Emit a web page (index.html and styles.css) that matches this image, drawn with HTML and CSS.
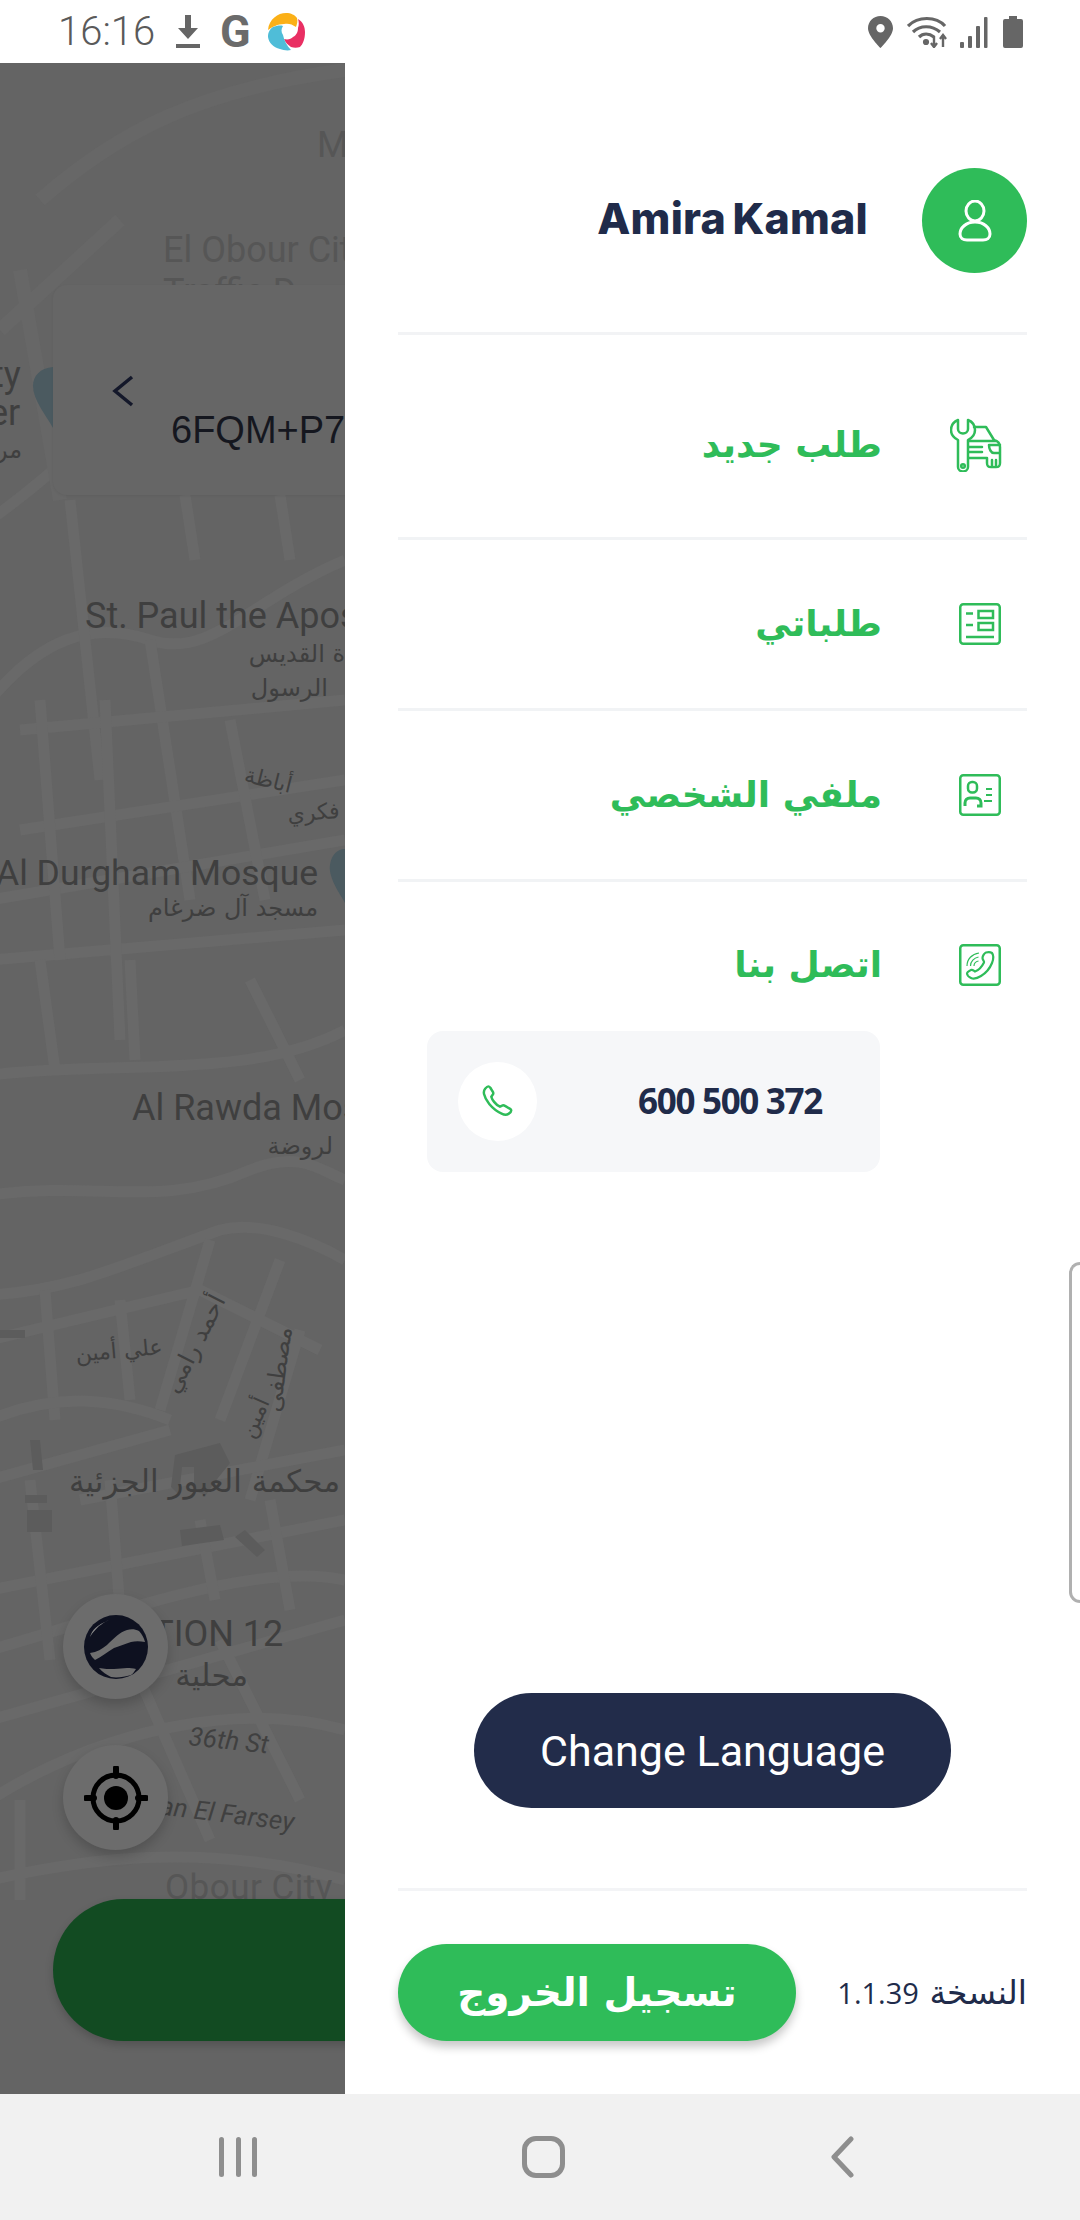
FILE: index.html
```html
<!DOCTYPE html>
<html lang="ar">
<head>
<meta charset="utf-8">
<title>Menu</title>
<link rel="stylesheet" href="styles.css">
</head>
<body>
<div class="screen">
  <header class="status">
    <div class="status-left">
      <span class="clock">16:16</span>
      <svg class="st-download" viewBox="0 0 26 33"><path d="M10 0h6v13h7L13 24 3 13h7z"/><rect x="1" y="29" width="24" height="4"/></svg>
      <span class="st-g">G</span>
      <svg class="st-logo" viewBox="0 0 38 38">
        <path d="M0 17C1 6 10 0 18 0c5 0 9 2 11 5 1 3 0 6-1 9-4-3-8-4-12-3-6 0-12 3-16 6z" fill="#fbb017"/>
        <path d="M30 6c5 3 7 8 7 13 0 7-2 12-5 15-3 1-6 1-9 0-3-2-6-5-7-8 4 1 7 0 9-2 4-2 5-6 5-9 1-3 1-6 0-9z" fill="#e92f63"/>
        <path d="M0 24c0-5 2-8 5-10 3-1 7-2 10-1-2 3-2 6 0 9 1 5 4 11 8 15-4 1-8 0-11-1C5 34 1 30 0 24z" fill="#4fbdd8"/>
      </svg>
    </div>
    <div class="status-right">
      <svg class="st-pin" viewBox="0 0 25 32"><path fill-rule="evenodd" d="M12.500 0C5.600 0 0 5.400 0 12.200 0 20 12.500 32 12.500 32S25 20 25 12.200C25 5.400 19.400 0 12.500 0zm0 8a4.200 4.200 0 1 1 0 8.400 4.200 4.200 0 0 1 0-8.400z"/></svg>
      <svg class="st-wifi" viewBox="0 0 44 32" fill="none" stroke="#666" stroke-width="3.200"><path d="M1 10C11 0 29 0 38 10"/><path d="M6 16c7-7 19-7 27 0"/><path d="M12 21c4-4 10-4 15 0"/><circle cx="19" cy="26" r="1.500" fill="#666"/><path d="M27 20v11M36 31V19" stroke-width="2.400"/><path d="M24 27l3 4 3-4M33 23l3-4 3 4" stroke-width="2.400"/></svg>
      <svg class="st-signal" viewBox="0 0 28 32"><rect x="0" y="26" width="4" height="6" rx="1"/><rect x="8" y="20" width="4" height="12" rx="1"/><rect x="16" y="10" width="4" height="22" rx="1"/><rect x="24" y="1" width="3.500" height="31" rx="1"/></svg>
      <svg class="st-battery" viewBox="0 0 20 32"><path d="M6 0h8v3h4a2 2 0 0 1 2 2v25a2 2 0 0 1-2 2H2a2 2 0 0 1-2-2V5a2 2 0 0 1 2-2h4z"/></svg>
    </div>
  </header>

  <main class="main">
    <section class="map">
      <svg class="map-canvas" viewBox="0 63 345 2031">
        <g class="roads">
          <path d="M-10 520C60 470 110 420 170 350M-10 700C40 640 90 620 150 640 210 660 250 600 345 560"/>
          <path d="M70 500L100 780M185 495L195 560M280 495L290 560M150 640L190 900"/>
          <path d="M20 730L345 700M20 830L345 780M-10 900L345 840M-10 960L345 930"/>
          <path d="M40 700L60 960M105 700L120 1040M230 720L265 900"/>
          <path d="M-10 1075C120 1060 250 1080 345 1030M40 960L55 1070M130 960L135 1060M250 980L300 1080"/>
          <path d="M-10 1195C100 1180 160 1210 250 1170 300 1150 320 1170 345 1180M-10 1295C70 1290 110 1270 220 1230 260 1220 310 1240 345 1260"/>
          <path d="M-10 1340L200 1290 320 1350M45 1290L55 1420M120 1300L130 1400M210 1240L160 1410M280 1260L220 1420M300 1330L250 1500"/>
          <path d="M-10 1420C60 1390 120 1400 170 1420M-10 1480L170 1430M80 1500L345 1450M-10 1590L345 1520M-10 1650C100 1620 250 1560 345 1580"/>
          <path d="M30 1480L50 1660M110 1480L120 1610M200 1520L215 1600M270 1500L290 1610"/>
          <path d="M-10 1720L345 1620M-10 1800C100 1730 240 1700 345 1730M140 1680L210 1840M220 1640L300 1800M-10 1880C80 1860 200 1840 345 1880M20 1800L20 1900"/>
          <path class="thin" d="M40 200C120 130 200 90 345 70M0 330L120 220M20 270L60 500"/>
        </g>
        <path class="block" d="M175 1455l45-12 10 20-16 20-8 12-12-4v-24h-12l-3 28-8-8z"/>
        <path class="block" d="M0 1330h25v8H0zM30 1440h10l3 30H33zM25 1495h22v8H25zM27 1510h25v22H27zM180 1530l40-5 4 15-42 6zM245 1530l20 20-8 7-22-20z"/>
        <path class="pin" d="M53 367c-13 1-20 9-20 19 0 14 13 29 20 42z"/>
        <path class="pin" d="M345 849c-10 0-16 10-15 22 2 14 15 30 15 32z"/>

        <text class="lbl faint" x="317" y="157">M</text>
        <text class="lbl faint" x="163" y="262">El Obour City</text>
        <text class="lbl faint" x="163" y="304">Traffic D</text>
        <text class="lbl" x="-8" y="387">ty</text>
        <text class="lbl" x="-11" y="425">er</text>
        <text class="ar sm" x="22" y="458">مر</text>
        <text class="lbl" x="85" y="628">St. Paul the Apostle</text>
        <text class="ar sm" x="345" y="662">ة القديس</text>
        <text class="ar sm" x="328" y="696">الرسول</text>
        <text class="ar xs" transform="translate(290 793) rotate(14)">أباظة</text>
        <text class="ar xs" transform="translate(340 818) rotate(-4)">فكري</text>
        <text class="lbl durgham" x="-4" y="885">Al Durgham Mosque</text>
        <text class="ar sm" x="318" y="916">مسجد آل ضرغام</text>
        <text class="lbl" x="132" y="1120">Al Rawda Mosque</text>
        <text class="ar sm" x="333" y="1154">لروضة</text>
        <text class="ar xs" transform="translate(163 1354) rotate(-5)">علي أمين</text>
        <text class="ar sm" transform="translate(226 1300) rotate(-63)">أحمد رامي</text>
        <text class="ar sm" transform="translate(292 1328) rotate(-82)">مصطفى</text>
        <text class="ar xs" transform="translate(270 1402) rotate(-66)">أمين</text>
        <text class="ar md" x="340" y="1492">محكمة العبور الجزئية</text>
        <text class="lbl" x="131" y="1646">ATION 12</text>
        <text class="ar md" x="248" y="1686">محلية</text>
        <text class="ital" transform="translate(188 1745) rotate(6)">36th St</text>
        <text class="ital" transform="translate(123 1810) rotate(7)">Eman El Farsey</text>
        <text class="lbl faint wide" x="165" y="1899">Obour City</text>
      </svg>

      <div class="search-card">
        <svg class="card-back" viewBox="0 0 22 32" fill="none"><path d="M20 2L3 16l17 14"/></svg>
        <span class="card-code">6FQM+P7</span>
      </div>
      <button class="fab fab-globe" aria-label="Map">
        <svg viewBox="0 0 64 64">
          <circle cx="32" cy="32" r="32" fill="#0e1120"/>
          <path d="M6 38c7-1 12-4 17-8 6-6 13-13 20-15 4-1 8-1 12 1 3 3 5 7 6 11-5-1-10-1-14 0-6 2-11 4-17 6-7 4-13 9-19 12-2-2-4-4-5-7z" fill="#6f6f6f"/>
          <path d="M15 53c5 1 10 1 15 1 5 0 9-1 13-1 3 0 6 0 9 1-2 3-3 5-5 6-7 2-14 3-20 2-4-2-9-5-12-9z" fill="#6f6f6f"/>
          <path d="M6 22C8 15 13 10 25 5 18 8 16 11 15 11 12 14 8 18 6 22z" fill="#8a8a8a"/>
        </svg>
      </button>
      <button class="fab fab-target" aria-label="Location">
        <svg viewBox="0 0 64 64" fill="none" stroke="#000">
          <circle cx="32" cy="32" r="23" stroke-width="5"/>
          <circle cx="32" cy="32" r="12" fill="#000" stroke="none"/>
          <path d="M32 2v8M32 54v8M2 32h8M54 32h8" stroke-width="6" stroke-linecap="round"/>
        </svg>
      </button>
      <div class="go-button"></div>
    </section>

    <aside class="drawer" dir="rtl">
      <div class="profile">
        <div class="avatar">
          <svg viewBox="0 0 36 42" fill="none" stroke="#fff" stroke-width="3"><ellipse cx="18" cy="11" rx="9" ry="10"/><path d="M18 22c-9 0-15 6-15 12 0 4 3 6 7 6h16c4 0 7-2 7-6 0-6-6-12-15-12z"/></svg>
        </div>
        <span class="name" dir="ltr">Amira Kamal</span>
      </div>

      <nav class="menu">
        <a class="row row-first">
          <span class="row-icon wide-icon">
            <svg viewBox="0 0 52 54" fill="none" stroke="#2fbc59" stroke-width="2.500" stroke-linejoin="round" stroke-linecap="round">
              <path d="M8 2C3 4 1 8 1 12c0 5 3 8 7 10v27c0 6 10 6 10 0V22c4-2 7-5 7-10 0-4-2-8-7-10v9c0 6-10 6-10 0z"/>
              <circle cx="13" cy="48" r="1.800"/>
              <path d="M24 9h12l8 13c4 1 6 3 6 7v16c0 3-1 4-4 4h-5c-3 0-4-1-4-4v-5H19M19 23h26M19 29h13M19 34h13M39 27h11M39 27c0 4 2 8 5 8h6M42 42v5M46 42v5"/>
            </svg>
          </span>
          <span class="row-label">طلب جديد</span>
        </a>
        <a class="row">
          <span class="row-icon">
            <svg viewBox="0 0 42 42" fill="none" stroke="#2fbc59" stroke-width="2.500"><rect x="1.250" y="1.250" width="39.500" height="39.500" rx="3"/><rect x="19.500" y="8" width="14.500" height="7"/><rect x="19.500" y="20" width="14.500" height="7"/><path d="M7 10.500h7M7 22h7M7 34h28"/></svg>
          </span>
          <span class="row-label">طلباتي</span>
        </a>
        <a class="row">
          <span class="row-icon">
            <svg viewBox="0 0 42 42" fill="none" stroke="#2fbc59" stroke-width="2.500"><rect x="1.250" y="1.250" width="39.500" height="39.500" rx="3"/><rect x="9" y="8" width="9" height="10.500" rx="4"/><path d="M6 32v-3c0-3 2-5 5-5h6c3 0 5 2 5 5v3h-4" stroke-width="3"/><path d="M27 15h6M27 21h6M25 27h8" stroke-width="2"/></svg>
          </span>
          <span class="row-label">ملفي الشخصي</span>
        </a>
        <div class="row row-last">
          <span class="row-icon">
            <svg viewBox="0 0 42 42" fill="none" stroke="#2fbc59" stroke-width="2.500"><rect x="1.250" y="1.250" width="39.500" height="39.500" rx="3"/><path stroke-width="2.200" d="M33 9c1.500 2 2 5 0 10-2 5-6 10-11 13-4 2.500-8 3-10 2-2-.8-4-3-4-4.500 0-1 2-2.500 4-3.500 1.500-.7 3 1 4 1.500 3-1 7-5 9-9 .5-1.500-1.500-2.500-1.500-4.500 0-2 2-5 3.500-5.500 2-.5 4.500-.5 6 .5z"/><path stroke-width="1.200" d="M8 22c0-7 5-12 12-13M11.500 22c0-4.500 3.500-8 8-9M15 22c0-2.500 2-4.500 4.500-5"/></svg>
          </span>
          <span class="row-label">اتصل بنا</span>
        </div>
        <div class="phone-card" dir="ltr">
          <span class="phone-circle">
            <svg viewBox="0 0 24 24" fill="none" stroke="#2fbc59" stroke-width="1.800" stroke-linejoin="round"><path d="M22 18.500c0 .8-1 1.900-2 2.500-1.300.8-3 .8-5-.2-3.500-1.600-6.500-4-9-7-2-2.500-3.300-5-3.800-7.300-.3-1.500 0-2.800.8-3.800.6-.7 1.500-1.700 2.300-1.700.5 0 1 .4 1.500 1L8.500 4.800c.6.800.6 1.500 0 2.300L7.500 8.500c.5 2 2.800 5.600 6.300 7.300l1.500-.8c.7-.4 1.400-.3 2.200.2l3.700 2.200c.5.300.8.500.8 1.100z"/></svg>
          </span>
          <span class="phone-number">600 500 372</span>
        </div>
      </nav>

      <div class="lang-wrap">
        <button class="lang-button" dir="ltr">Change Language</button>
      </div>

      <footer class="drawer-foot">
        <span class="version">النسخة <span class="version-num">1.1.39</span></span>
        <button class="logout">تسجيل الخروج</button>
      </footer>
    </aside>
    <div class="edge-handle"></div>
  </main>

  <footer class="navbar">
    <span class="nav-recents"><i></i><i></i><i></i></span>
    <span class="nav-home"></span>
    <svg class="nav-back" viewBox="0 0 24 42" fill="none" stroke="#8e8e8e" stroke-width="5" stroke-linecap="round" stroke-linejoin="round"><path d="M21 3L4 21l17 18"/></svg>
  </footer>
</div>
</body>
</html>
```

FILE: styles.css
```css
* { box-sizing: border-box; }
html, body { margin: 0; padding: 0; }
body { width: 1080px; height: 2220px; overflow: hidden; background: #fff; font-family: "Roboto", "DejaVu Sans", sans-serif; }
button { border: 0; padding: 0; font: inherit; }
.screen { width: 1080px; height: 2220px; display: flex; flex-direction: column; }

/* status bar */
.status { height: 63px; flex: none; background: #fff; display: flex; justify-content: space-between; align-items: center; padding: 0 57px 0 58px; }
.status-left, .status-right { display: flex; align-items: center; }
.clock { font: 300 40px/1 "Roboto", sans-serif; color: #5a5a5a; width: 117px; }
.st-download { width: 26px; height: 33px; fill: #666; margin-right: 19px; }
.st-g { font: 700 45px/1 "Roboto", sans-serif; color: #6b6b6b; width: 48px; }
.st-logo { width: 38px; height: 38px; }
.st-pin { width: 25px; height: 32px; fill: #666; margin-right: 14px; }
.st-wifi { width: 44px; height: 32px; margin-right: 9px; }
.st-signal { width: 28px; height: 32px; fill: #666; margin-right: 15px; }
.st-battery { width: 20px; height: 32px; fill: #666; }

/* main */
.main { flex: 1; min-height: 0; display: flex; position: relative; }
.map { width: 345px; flex: none; position: relative; overflow: hidden; background: #646464; }
.map-canvas { position: absolute; left: 0; top: 0; width: 345px; height: 2031px; display: block; }
.roads { fill: none; stroke: #696969; stroke-width: 11; }
.roads .thin { stroke: #676767; stroke-width: 14; }
.block { fill: #5c5c5c; }
.pin { fill: #4b5a60; }
.lbl { font: 400 36px "Roboto", sans-serif; fill: #3f3f3f; }
.lbl.faint { fill: #565656; }
.lbl.durgham { font-size: 35.500px; }
.lbl.wide { font-size: 35px; letter-spacing: .5px; }
.ital { font: italic 400 26px "Roboto", sans-serif; fill: #404040; }
.ar { font-family: "DejaVu Sans", sans-serif; fill: #3f3f3f; text-anchor: start; direction: rtl; }
.ar.xs { font-size: 22px; }
.ar.sm { font-size: 24px; }
.ar.md { font-size: 31px; }

.search-card { position: absolute; left: 53px; top: 222px; width: 340px; height: 210px; background: #666; border-radius: 14px; box-shadow: 0 1px 3px rgba(0,0,0,.06); }
.card-back { position: absolute; left: 59px; top: 90px; width: 22px; height: 32px; stroke: #14182a; stroke-width: 3.500; }
.card-code { position: absolute; left: 118px; top: 123px; font: 400 38px/44px "Liberation Sans", sans-serif; color: #15171f; white-space: nowrap; }
.fab { position: absolute; left: 63px; width: 105px; height: 105px; border-radius: 50%; background: #6c6c6c; box-shadow: 0 6px 12px rgba(0,0,0,.18); display: flex; align-items: center; justify-content: center; }
.fab svg { width: 64px; height: 64px; display: block; }
.fab-globe { top: 1531px; }
.fab-target { top: 1682px; }
.go-button { position: absolute; left: 53px; top: 1836px; width: 400px; height: 142px; border-radius: 71px; background: #124b22; box-shadow: 0 4px 8px rgba(0,0,0,.18); }

/* drawer */
.drawer { flex: 1; min-width: 0; background: #fff; padding: 105px 53px 0; display: flex; flex-direction: column; position: relative; z-index: 1; }
.profile { display: flex; align-items: center; gap: 54px; padding-bottom: 59px; border-bottom: 3px solid #f2f3f5; }
.avatar { width: 105px; height: 105px; border-radius: 50%; background: #2fbc59; display: flex; align-items: center; justify-content: center; flex: none; }
.avatar svg { width: 36px; height: 42px; display: block; margin-top: 1px; }
.name { font: 800 43px/1 "Inter", sans-serif; letter-spacing: .2px; word-spacing: -3px; color: #202b4a; margin-bottom: 5px; }
.menu { display: flex; flex-direction: column; }
.row { display: flex; align-items: center; height: 171px; padding-right: 26px; gap: 77px; border-bottom: 3px solid #f1f3f5; text-decoration: none; }
.row-first { height: 205px; padding-top: 18px; }
.row-last { border-bottom: 0; height: 149px; padding-top: 17px; }
.row-icon { width: 42px; flex: none; display: flex; justify-content: center; }
.row-icon svg { width: 42px; height: 42px; display: block; }
.wide-icon svg { width: 52px; height: 54px; flex: none; margin-right: 9px; }
.row-label { font: 700 36px/1 "DejaVu Sans", sans-serif; color: #2fbc59; }
.phone-card { height: 141px; width: 453px; margin-right: 147px; background: #f6f7f9; border-radius: 16px; display: flex; align-items: center; padding: 0 58px 0 31px; justify-content: space-between; }
.phone-circle { width: 79px; height: 79px; border-radius: 50%; background: #fff; display: flex; align-items: center; justify-content: center; }
.phone-circle svg { width: 33px; height: 33px; display: block; }
.phone-number { font: 700 35px/1 "Open Sans", sans-serif; letter-spacing: -1.300px; color: #202b4a; margin-bottom: 2px; }
.lang-wrap { flex: 1; display: flex; justify-content: center; align-items: flex-end; padding-bottom: 80px; }
.lang-button { width: 477px; height: 115px; border-radius: 58px; background: #222c4a; color: #fff; font: 400 43px/1 "Roboto", sans-serif; padding-top: 2px; }
.drawer-foot { height: 206px; flex: none; border-top: 3px solid #f3f4f6; display: flex; align-items: flex-start; justify-content: space-between; padding-top: 53px; }
.version { font: 400 33px/97px "DejaVu Sans", sans-serif; color: #202b4a; white-space: nowrap; }
.version-num { font: 400 29px/97px "Open Sans", sans-serif; letter-spacing: -1.500px; }
.logout { width: 398px; height: 97px; border-radius: 49px; background: #2fbc59; color: #fff; font: 700 39px/1 "DejaVu Sans", sans-serif; box-shadow: 0 6px 10px rgba(0,0,0,.22); }
.edge-handle { position: absolute; right: 0; top: 1199px; width: 11px; height: 341px; border: 3px solid #b0b0b0; border-right: 0; border-radius: 13px 0 0 13px; z-index: 2; }

/* nav bar */
.navbar { height: 126px; flex: none; background: #f1f1f1; position: relative; display: flex; align-items: center; justify-content: space-between; padding: 0 226px 0 219px; }
.nav-recents { width: 38px; height: 40px; display: flex; justify-content: space-between; }
.nav-recents i { width: 5px; height: 40px; border-radius: 2.500px; background: #8e8e8e; }
.nav-home { width: 43px; height: 42px; border: 5px solid #8e8e8e; border-radius: 14px; }
.nav-back { width: 24px; height: 42px; }
```
